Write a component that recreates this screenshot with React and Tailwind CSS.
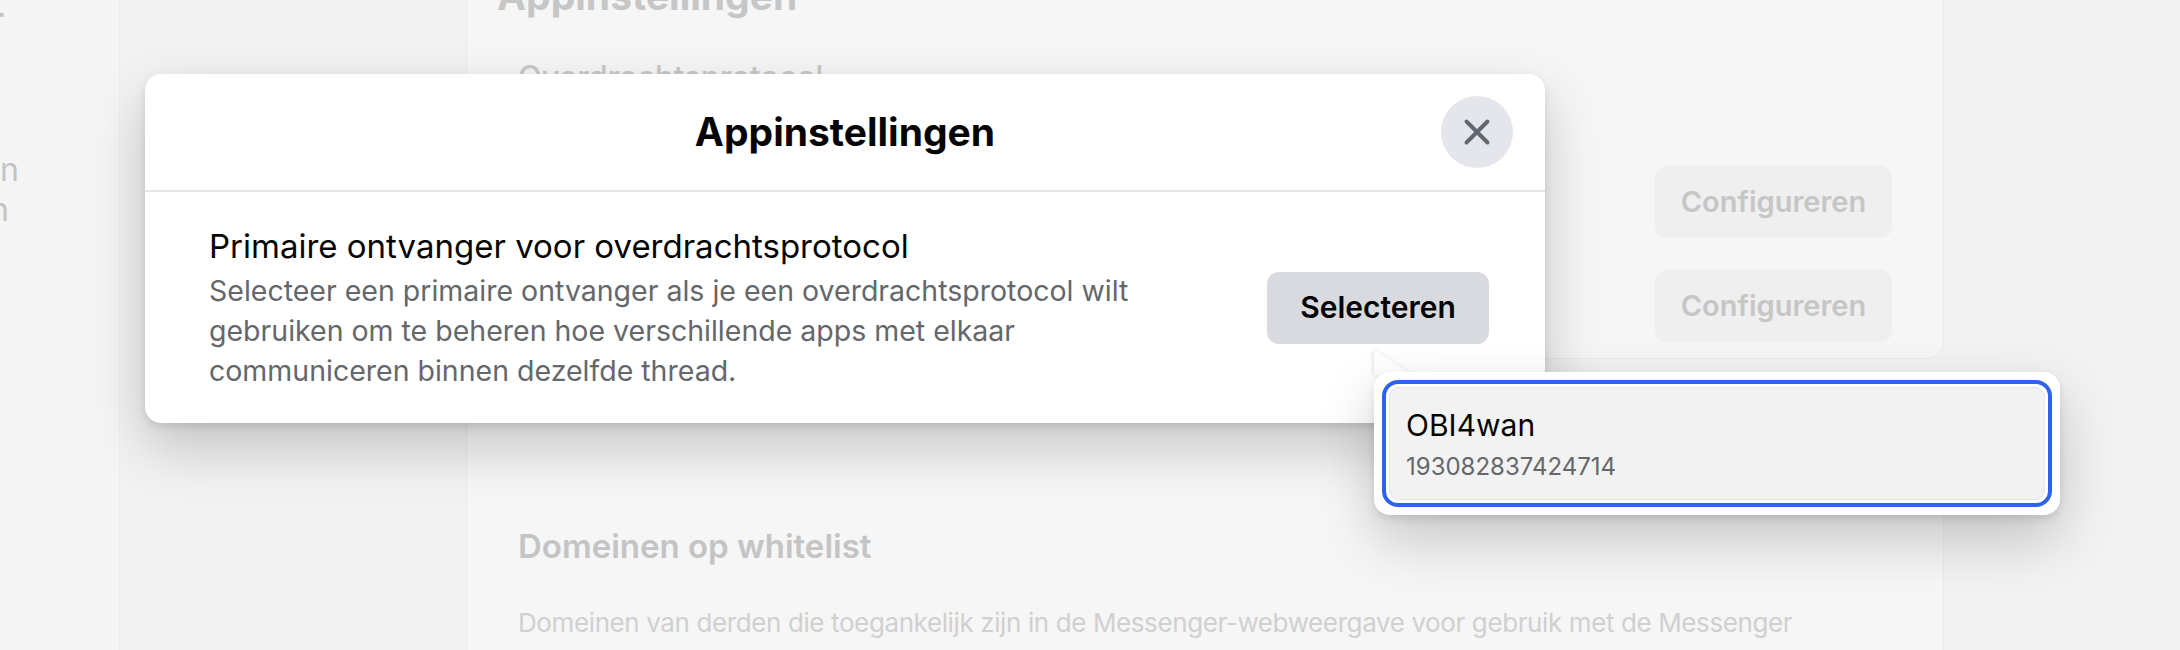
import React from "react";

const Card = ({ className = "", children }) => (
  <section className={`bg-[#f6f6f6] border border-[#ebebeb] ${className}`}>{children}</section>
);

const CloseIcon = () => (
  <svg viewBox="0 0 24 24" className="w-[36px] h-[36px]" fill="none">
    <path d="M5 5 L19 19 M19 5 L5 19" stroke="#606770" strokeWidth="2.6" strokeLinecap="round" />
  </svg>
);

const BackgroundPage = () => (
  <>
    <aside className="w-[120px] shrink-0 bg-[#f5f5f5] border-r border-[#eeeeee] text-[32px] leading-[40px] text-[#c4c4c4]">
      <div className="-mt-[14px] -ml-[3px] h-[40px]">.</div>
      <div className="mt-[124px]">n</div>
      <div className="-ml-[10px]">n</div>
    </aside>
    <div className="w-[346px] shrink-0" />
    <main className="w-[1478px] shrink-0 flex flex-col gap-[53px]">
      <Card className="-mt-[60px] h-[430px] rounded-b-[16px] px-[30px] pt-[31px]">
        <h1 className="text-[39px] leading-[48px] font-bold text-[#c6c6c6]">Appinstellingen</h1>
        <div className="pl-[21px] pr-[21px]">
          <h2 className="mt-[37px] text-[31px] leading-[40px] font-medium text-[#c8c8c8]">Overdrachtsprotocol</h2>
          <div className="mt-[53px] flex flex-col">
            {[0, 1].map((i) => (
              <div key={i} className="h-[104px] flex items-center justify-end">
                <button className="w-[237px] h-[72px] rounded-[12px] bg-[#efefef] text-[29px] font-semibold text-[#c6c6c6]">
                  Configureren
                </button>
              </div>
            ))}
          </div>
        </div>
      </Card>
      <Card className="flex-1 rounded-t-[16px] px-[51px] pt-[113px]">
        <h2 className="text-[33px] leading-[40px] font-semibold text-[#c4c4c4]">Domeinen op whitelist</h2>
        <p className="mt-[37px] text-[26px] leading-[40px] tracking-[-0.015em] text-[#d0d0d0] max-w-[1340px]">
          Domeinen van derden die toegankelijk zijn in de Messenger-webweergave voor gebruik met de Messenger
          Extensions SDK en voor Messenger-plug-ins
        </p>
      </Card>
    </main>
    <div className="flex-1" />
  </>
);

export default function App() {
  return (
    <div className="relative w-[2180px] h-[650px] overflow-hidden bg-[#f2f2f2] flex font-['Inter','Noto_Sans',sans-serif]">
      <BackgroundPage />

      {/* modal */}
      <div className="absolute left-[145px] top-[74px] w-[1400px] rounded-[16px] bg-white shadow-[0_24px_56px_rgba(0,0,0,0.2),0_4px_8px_rgba(0,0,0,0.1)]">
        <header className="h-[118px] flex items-center px-[32px] border-b-2 border-[#e5e5e5]">
          <div className="w-[72px]" />
          <h1 className="flex-1 text-center text-[39px] leading-[48px] font-bold text-[#050505]">Appinstellingen</h1>
          <button className="w-[72px] h-[72px] rounded-full bg-[#e4e6eb] flex items-center justify-center">
            <CloseIcon />
          </button>
        </header>
        <div className="flex items-center gap-[32px] pl-[64px] pr-[56px] py-[32px]">
          <div className="flex-1 max-w-[990px]">
            <h2 className="text-[33px] leading-[44px] text-[#050505]">Primaire ontvanger voor overdrachtsprotocol</h2>
            <p className="mt-[3px] text-[28.5px] leading-[40px] text-[#65676b]">
              Selecteer een primaire ontvanger als je een overdrachtsprotocol wilt gebruiken om te beheren hoe
              verschillende apps met elkaar communiceren binnen dezelfde thread.
            </p>
          </div>
          <button className="ml-auto shrink-0 w-[222px] h-[72px] rounded-[12px] bg-[#d8dadf] text-[30px] font-semibold text-[#050505]">
            Selecteren
          </button>
        </div>
      </div>

      {/* dropdown pointer */}
      <svg
        className="absolute left-[1372px] top-[347px] w-[42px] h-[28px] drop-shadow-[-1px_0_2px_rgba(0,0,0,0.12)]"
        viewBox="0 0 42 28"
      >
        <path d="M2 28 V7 Q2 1 6.5 5 L40 28 Z" fill="#ffffff" />
      </svg>

      {/* dropdown */}
      <div className="absolute left-[1374px] top-[372px] w-[686px] rounded-[16px] bg-white p-[8px] shadow-[0_24px_56px_rgba(0,0,0,0.2),0_4px_8px_rgba(0,0,0,0.1)]">
        <div className="rounded-[16px] border-[4px] border-[#2d63f0] p-[3px]">
          <div className="h-[113px] rounded-[10px] bg-[#f2f2f2] border border-[#e2e6f3] px-[16px] pt-[17px]">
            <div className="text-[30px] leading-[40px] text-[#050505]">OBI4wan</div>
            <div className="mt-[4px] text-[24px] leading-[36px] text-[#65676b]">193082837424714</div>
          </div>
        </div>
      </div>
    </div>
  );
}
